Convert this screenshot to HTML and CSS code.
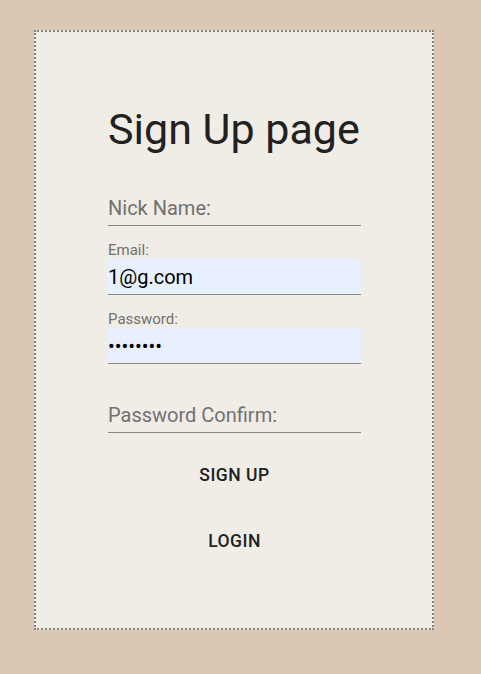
FILE: index.html
```html
<!DOCTYPE html>
<html lang="en">
<head>
<meta charset="utf-8">
<title>Sign Up page</title>
<link rel="stylesheet" href="styles.css">
</head>
<body>
<div class="card">
  <div class="form">
    <h1 class="title">Sign Up page</h1>
    <div class="field">
      <div class="label"></div>
      <div class="input"><span class="placeholder">Nick Name:</span></div>
    </div>
    <div class="field">
      <div class="label">Email:</div>
      <div class="input filled">1@g.com</div>
    </div>
    <div class="field">
      <div class="label">Password:</div>
      <div class="input filled dots">••••••••</div>
    </div>
    <div class="field">
      <div class="label"></div>
      <div class="input"><span class="placeholder">Password Confirm:</span></div>
    </div>
    <button class="btn btn-first" type="button">Sign Up</button>
    <button class="btn btn-second" type="button">Login</button>
  </div>
</div>
</body>
</html>
```
FILE: styles.css
```css
html, body {
  margin: 0;
  padding: 0;
}
body {
  background: #dcc7b5;
  font-family: Roboto, "Liberation Sans", sans-serif;
  color: #212121;
  min-height: 674px;
  padding-top: 30px;
  box-sizing: border-box;
}
.card {
  margin-left: 34px;
  width: 400px;
  height: 600px;
  box-sizing: border-box;
  border: 2px dotted #808080;
  background: #f0ece6;
  padding: 73px 0 0 72px;
}
.form {
  width: 253px;
  display: flex;
  flex-direction: column;
}
.title {
  margin: 0 0 3px;
  font-size: 43px;
  font-weight: 400;
  line-height: 49px;
  color: #212121;
  white-space: nowrap;
}
.field {
  margin-top: 16px;
  display: flex;
  flex-direction: column;
}
.label {
  height: 17px;
  font-size: 15px;
  line-height: 17px;
  color: #717171;
}
.input {
  height: 36px;
  box-sizing: border-box;
  border-bottom: 1px solid #8b8985;
  display: flex;
  align-items: center;
  font-size: 20px;
  color: #000;
  padding-top: 1px;
}
.placeholder {
  color: #717171;
}
.filled {
  background: #e8f0fe;
}
.dots {
  font-size: 20px;
  letter-spacing: 0;
}
.btn {
  align-self: center;
  background: none;
  border: 0;
  font-family: Roboto, "Liberation Sans", sans-serif;
  font-weight: 500;
  font-size: 17.5px;
  letter-spacing: 0.5px;
  text-transform: uppercase;
  color: #212121;
  height: 42px;
  line-height: 42px;
  padding: 0 8px;
}
.btn-first {
  margin-top: 21px;
}
.btn-second {
  margin-top: 24px;
}
```
